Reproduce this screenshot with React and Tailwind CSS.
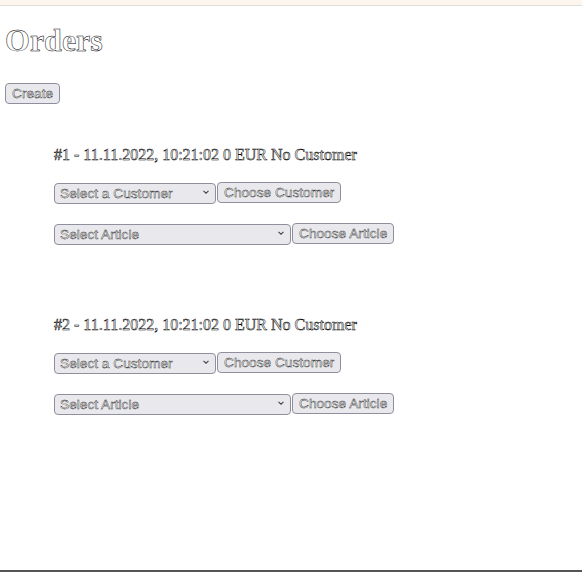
import React from 'react';

const orders = [
  { id: 1, date: '11.11.2022, 10:21:02', total: 0 },
  { id: 2, date: '11.11.2022, 10:21:02', total: 0 },
];

// hollow, outlined lettering as in the screenshot
const outline = 'text-white [-webkit-text-stroke:0.5px_#000]';
const outlineThin = 'text-white [-webkit-text-stroke:0.4px_#111]';
const sans = "font-['Liberation_Sans',Arial,sans-serif]";
const serif = "font-['Liberation_Serif','Times_New_Roman',serif]";

const Chevron = () => (
  <svg className="absolute right-[6px] top-1/2 -translate-y-1/2 w-[8px] h-[8px] pointer-events-none" viewBox="0 0 8 8">
    <path d="M1.5 2.8 L4 5.2 L6.5 2.8" fill="none" stroke="#444" strokeWidth="1.1" />
  </svg>
);

const Select = ({ label, width }) => (
  <div className="relative inline-block" style={{ width }}>
    <select className={`appearance-none w-full h-[21px] bg-[#e9e9ed] border border-[#8f8f9d] rounded-[4px] pl-[5px] text-[13.7px] leading-[19px] ${sans} ${outlineThin}`}>
      <option>{label}</option>
    </select>
    <Chevron />
  </div>
);

const Button = ({ children }) => (
  <button className={`h-[21px] bg-[#e9e9ed] border border-[#8f8f9d] rounded-[4px] px-[6px] text-[13.7px] leading-[19px] ${sans} ${outlineThin}`}>
    {children}
  </button>
);

const Order = ({ order }) => (
  <li className="mb-[71px]">
    <p className={`text-[16px] leading-[18px] ${serif} ${outline}`}>
      #{order.id} - {order.date} {order.total} EUR No Customer
    </p>
    <div className="flex items-center gap-[1px] mt-[16px]">
      <Select label="Select a Customer" width={162} />
      <Button>Choose Customer</Button>
    </div>
    <div className="flex items-center gap-[1px] mt-[17px]">
      <Select label="Select Article" width={237} />
      <Button>Choose Article</Button>
    </div>
  </li>
);

export default function App() {
  return (
    <div className="min-h-[572px] flex flex-col bg-white border-b-2 border-[#555]">
      <div className="h-[6px] bg-[#fdf6ee] border-b border-[#ddd]" />
      <div className="px-[5px]">
        <h1 className={`mt-[16px] text-[32px] leading-[37px] font-bold ${serif} ${outline}`}>
          Orders
        </h1>
        <div className="mt-[21px]">
          <Button>Create</Button>
        </div>
        <ul className="pl-[49px] mt-[42px]">
          {orders.map((o) => (
            <Order key={o.id} order={o} />
          ))}
        </ul>
      </div>
    </div>
  );
}
